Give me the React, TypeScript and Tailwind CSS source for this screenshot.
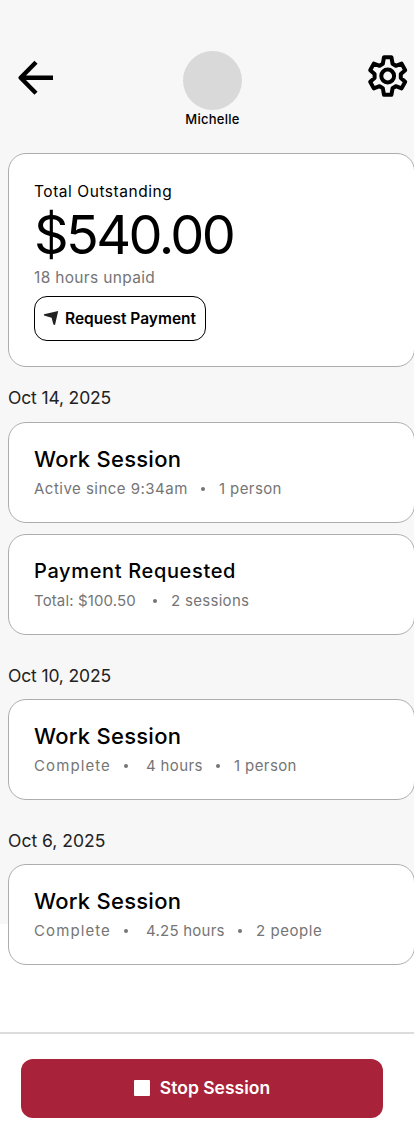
import type { ReactNode } from 'react';

function Card({ children, className }: { children: ReactNode; className: string }) {
  return (
    <section className={`w-[407px] shrink-0 rounded-[18px] border border-[#adadad] bg-white pl-[25px] ${className}`}>
      {children}
    </section>
  );
}

function Bullet({ className }: { className: string }) {
  return <span className={`h-1 w-1 shrink-0 rounded-full bg-[#757575] ${className}`} />;
}

function DateHeading({ children, className }: { children: ReactNode; className: string }) {
  return <h2 className={`text-[17.5px] leading-6 text-[#222] ${className}`}>{children}</h2>;
}

function Title({ children, className }: { children: ReactNode; className: string }) {
  return <h3 className={`leading-[30px] font-medium text-black ${className}`}>{children}</h3>;
}

function Details({ children }: { children: ReactNode }) {
  return <div className="flex h-[30px] items-center whitespace-nowrap text-[15px] leading-6 text-[#757575]">{children}</div>;
}

export default function App() {
  return (
    <div className="h-[1128px] w-full overflow-hidden bg-white font-['Inter','Liberation_Sans',sans-serif]">
      <div className="h-[924px] bg-[#f7f7f7]">
        <header className="flex h-[153px] items-start justify-between pr-[6px] pl-[18px]">
          <button aria-label="Back" className="mt-[60px] w-[40px]">
            <svg width="36" height="36" viewBox="0 0 36 36" fill="none" stroke="#000" strokeWidth="4.4" strokeLinejoin="round">
              <path d="M35 17.7H3M18 2.2 2.7 17.7 18 33.2" />
            </svg>
          </button>
          <div className="mt-[51px] flex w-[60px] flex-col items-center">
            <div className="h-[59px] w-[59px] rounded-full bg-[#d9d9d9]" />
            <span className="text-[13px] leading-[18px] font-medium tracking-[0.25px]">Michelle</span>
          </div>
          <button aria-label="Settings" className="mt-[55px] w-[41px]">
            <svg width="41" height="42" viewBox="0 0 41 42" fill="none" stroke="#000" strokeWidth="4" strokeLinejoin="round">
              <path d="M17 2.2h7.4l1.2 6.6 3.2 2 5.8-2.2 3.6 6.6-4.4 3.8v4l4.4 3.8-3.6 6.6-5.8-2.2-3.2 2-1.2 6.6H17l-1.2-6.6-3.2-2-5.8 2.2-3.6-6.6L7.6 23v-4l-4.4-3.8 3.6-6.6 5.8 2.2 3.2-2z" />
              <circle cx="20.7" cy="21" r="6.4" />
            </svg>
          </button>
        </header>
        <main className="flex flex-col items-start pl-[8px]">
          <Card className="h-[214px] pt-[26px]">
            <p className="text-[15.5px] leading-6 tracking-[0.54px] text-black">Total Outstanding</p>
            <p className="h-[62px] text-[54px] leading-[62px] tracking-[-2.6px] text-black">$540.00</p>
            <p className="text-[15.5px] leading-6 tracking-[0.33px] text-[#757575]">18 hours unpaid</p>
            <button className="mt-[6px] flex h-[45px] w-[172px] items-center rounded-[13px] border border-black pl-[9px] text-[15.5px] font-semibold">
              <svg width="15" height="15" viewBox="0 0 15 15" className="mr-[6px]">
                <path d="M0 3.2 14.2 0 11 14 9.4 13.6 7.6 6.8 0 4.5z" fill="#222" />
              </svg>
              <span className="whitespace-nowrap">Request Payment</span>
            </button>
          </Card>
          <DateHeading className="mt-[19px] tracking-[-0.15px]">Oct 14, 2025</DateHeading>
          <Card className="mt-[12px] h-[101px] pt-[21px]">
            <Title className="text-[22px] tracking-[0.25px]">Work Session</Title>
            <Details>
              <span className="w-[167px] tracking-[0.48px]">Active since 9:34am</span>
              <Bullet className="mr-[14px]" />
              <span className="tracking-[0.4px]">1 person</span>
            </Details>
          </Card>
          <Card className="mt-[11px] h-[101px] pt-[21px]">
            <Title className="text-[20px] tracking-[0.65px]">Payment Requested</Title>
            <Details>
              <span className="w-[119px] tracking-[0.12px]">Total: $100.50</span>
              <Bullet className="mr-[14px]" />
              <span className="tracking-[0.3px]">2 sessions</span>
            </Details>
          </Card>
          <DateHeading className="mt-[29px] tracking-[-0.15px]">Oct 10, 2025</DateHeading>
          <Card className="mt-[11px] h-[101px] pt-[21px]">
            <Title className="text-[22px] tracking-[0.25px]">Work Session</Title>
            <Details>
              <span className="w-[90px] tracking-[1.1px]">Complete</span>
              <Bullet className="mr-[18px]" />
              <span className="w-[70px] tracking-[0.35px]">4 hours</span>
              <Bullet className="mr-[14px]" />
              <span className="tracking-[0.4px]">1 person</span>
            </Details>
          </Card>
          <DateHeading className="mt-[29px]">Oct 6, 2025</DateHeading>
          <Card className="mt-[11px] h-[101px] pt-[21px]">
            <Title className="text-[22px] tracking-[0.25px]">Work Session</Title>
            <Details>
              <span className="w-[90px] tracking-[1.1px]">Complete</span>
              <Bullet className="mr-[18px]" />
              <span className="w-[92px] tracking-[0.25px]">4.25 hours</span>
              <Bullet className="mr-[14px]" />
              <span className="tracking-[0.55px]">2 people</span>
            </Details>
          </Card>
        </main>
      </div>
      <footer className="mt-[108px] border-t-2 border-[#dcdcdc] pt-[25px] pl-[21px]">
        <button className="flex h-[59px] w-[362px] items-center justify-center gap-[10px] rounded-[12px] bg-[#a82239] text-[17.5px] font-semibold text-white">
          <span className="mb-[2px] h-4 w-4 rounded-[1px] bg-white" />
          <span>Stop Session</span>
        </button>
      </footer>
    </div>
  );
}
